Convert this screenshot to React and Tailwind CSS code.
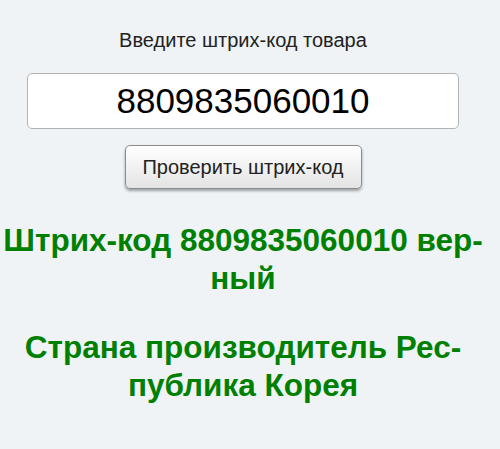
import React, { useState } from "react";

const App = () => {
    const [code, setCode] = useState("8809835060010");

    return (
        <div className="min-h-[449px] w-full bg-[#eff3f5] font-['Liberation_Sans',Arial,sans-serif]">
            <div className="w-[486px] flex flex-col items-center pt-[29px]">
                <label className="text-[20px] leading-[22px] text-[#222]">Введите штрих-код товара</label>

                <div className="w-full px-[27px] mt-[22px]">
                    <input
                        type="text"
                        value={code}
                        onChange={(e) => setCode(e.target.value)}
                        className="w-full h-[56px] bg-white border border-[#b3b3b3] rounded-[5px] text-center text-[35px] text-black outline-none"
                    />
                </div>

                <button className="mt-[16px] w-[237px] h-[44px] rounded-[5px] border border-[#8c8c8c] bg-gradient-to-b from-white to-[#e4e4e4] shadow-[0_2px_3px_rgba(0,0,0,0.35)] text-[20px] text-[#222]">
                    Проверить штрих-код
                </button>

                <h2 className="mt-[33px] whitespace-nowrap text-center font-bold text-[31.5px] leading-[37.5px] text-[#008000]">
                    Штрих-код 8809835060010 вер-<br />ный
                </h2>

                <h2 className="mt-[32px] whitespace-nowrap text-center font-bold text-[31.5px] leading-[37.5px] text-[#008000]">
                    Страна производитель Рес-<br />публика Корея
                </h2>
            </div>
        </div>
    );
};

export default App;
